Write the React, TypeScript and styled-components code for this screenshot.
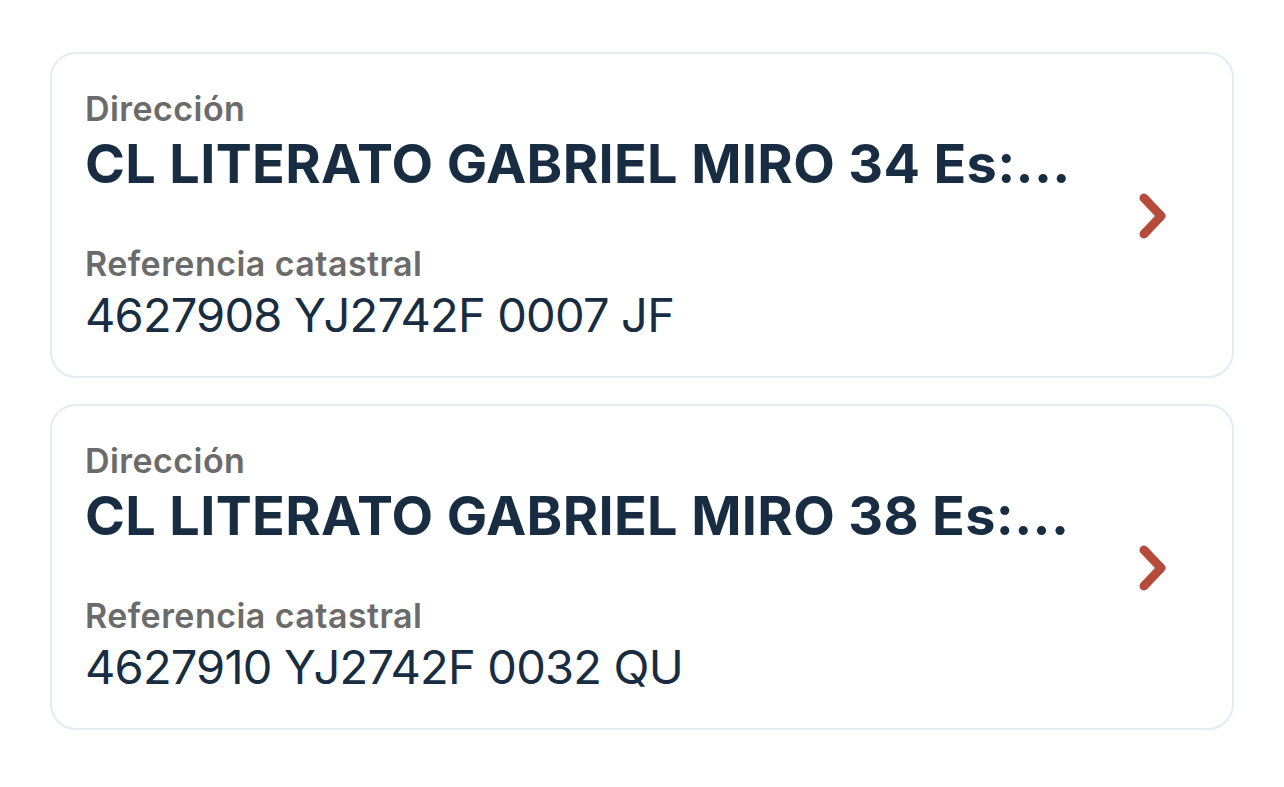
import React from "react";
import styled, { createGlobalStyle } from "styled-components";

type Property = {
  id: string;
  address: string;
  reference: string;
};

const properties: Property[] = [
  {
    id: "34",
    address: "CL LITERATO GABRIEL MIRO 34 Es:...",
    reference: "4627908 YJ2742F 0007 JF",
  },
  {
    id: "38",
    address: "CL LITERATO GABRIEL MIRO 38 Es:...",
    reference: "4627910 YJ2742F 0032 QU",
  },
];

const GlobalStyle = createGlobalStyle`
  body {
    margin: 0;
    background: #ffffff;
    font-family: Inter, "Noto Sans", "Liberation Sans", sans-serif;
  }
`;

const List = styled.ul`
  list-style: none;
  margin: 0;
  padding: 52px 50px;
  display: flex;
  flex-direction: column;
  gap: 26px;
`;

const Card = styled.li`
  display: flex;
  align-items: center;
  gap: 24px;
  padding: 34px 64px 32px 33px;
  border: 2px solid #e3ecf1;
  border-radius: 26px;
  background: #ffffff;
`;

const Content = styled.div`
  flex: 1;
  min-width: 0;
  display: flex;
  flex-direction: column;
`;

const Label = styled.span<{ spaced?: boolean }>`
  font-size: 34px;
  line-height: 41px;
  font-weight: 600;
  color: #6b6b6b;
  letter-spacing: 0.45px;
  margin-top: ${(props) => (props.spaced ? "47px" : "0")};
`;

const Title = styled.span`
  margin-top: 2px;
  font-size: 54px;
  line-height: 65px;
  font-weight: 700;
  color: #182d42;
  white-space: nowrap;
  overflow: hidden;
  letter-spacing: 0.35px;
`;

const Value = styled.span`
  margin-top: 2px;
  font-size: 47px;
  line-height: 58px;
  font-weight: 400;
  color: #182d42;
  letter-spacing: -0.8px;
`;

const Chevron = () => (
  <svg width="30" height="50" viewBox="0 0 30 50" fill="none">
    <polyline
      points="6,7 23,25 6,43"
      stroke="#b84a3c"
      strokeWidth="9"
      strokeLinecap="round"
      strokeLinejoin="round"
    />
  </svg>
);

const App: React.FC = () => {
  return (
    <>
      <GlobalStyle />
      <List>
        {properties.map((item) => (
          <Card key={item.id}>
            <Content>
              <Label>Dirección</Label>
              <Title>{item.address}</Title>
              <Label spaced>Referencia catastral</Label>
              <Value>{item.reference}</Value>
            </Content>
            <Chevron />
          </Card>
        ))}
      </List>
    </>
  );
};

export default App;
